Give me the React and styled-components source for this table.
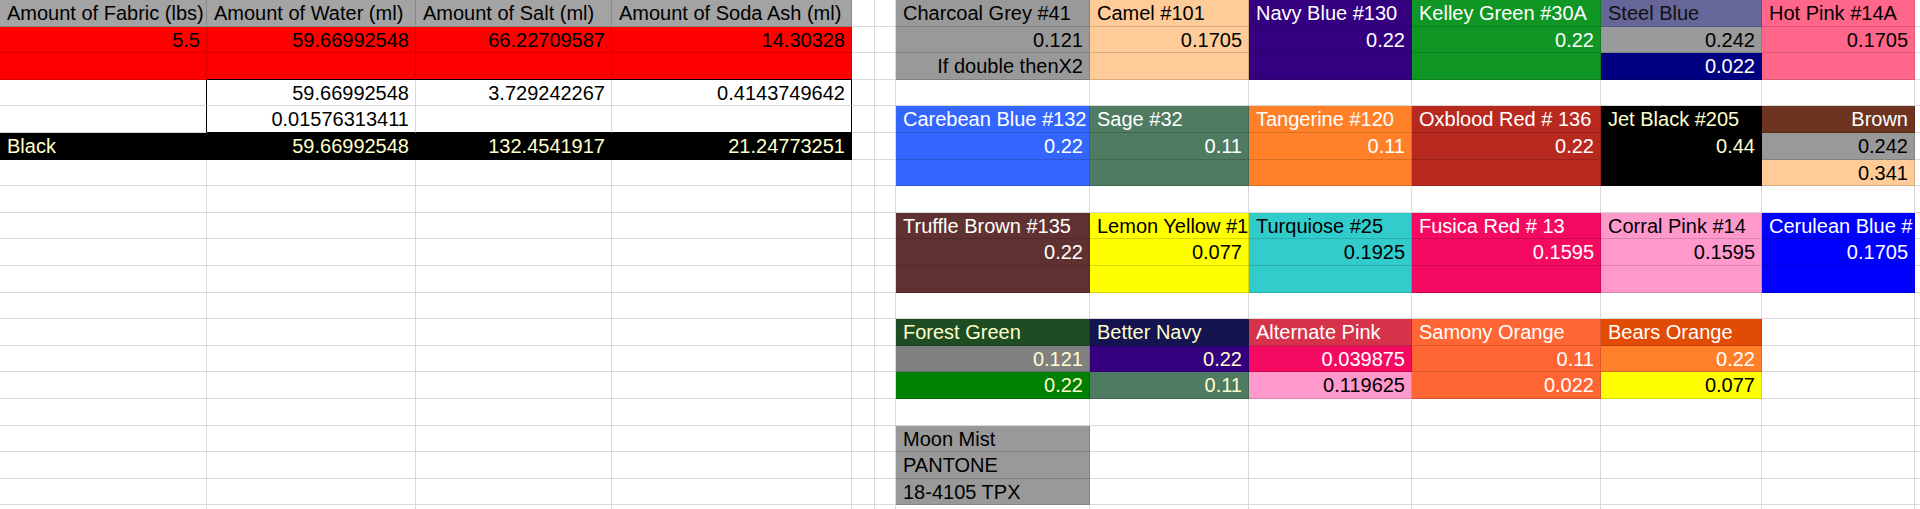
import React from 'react';
import styled, { createGlobalStyle } from 'styled-components';

const GlobalStyle = createGlobalStyle`
  html, body {
    margin: 0;
    padding: 0;
    background: #ffffff;
    overflow: hidden;
  }
  body {
    font-family: "Liberation Sans", Arial, Helvetica, sans-serif;
  }
`;

const COLS = [207, 209, 196, 240, 23, 21, 194, 159, 163, 189, 161, 153, 5];
const ROW_COUNT = 20;

const Sheet = styled.div`
  display: grid;
  grid-template-columns: ${COLS.map((w) => `${w}px`).join(' ')};
  grid-auto-rows: 26.6px;
  width: 1920px;
  height: 509px;
  overflow: hidden;
  font-size: 20px;
`;

const Cell = styled.div`
  box-sizing: border-box;
  background: ${(p) => p.$bg || '#ffffff'};
  color: ${(p) => p.$fg || '#000000'};
  text-align: ${(p) => p.$align || 'right'};
  border-right: 1px solid ${(p) => (p.$edgeR ? '#000000' : 'rgba(0, 0, 0, 0.15)')};
  border-bottom: 1px solid ${(p) => (p.$edgeB ? '#000000' : 'rgba(0, 0, 0, 0.15)')};
  padding: 1px 6px 0 7px;
  line-height: 25px;
  white-space: nowrap;
  overflow: hidden;
`;

// palette
const GREY = '#999999';
const HEAD = '#a3a3a3';
const RED = '#ff0000';
const CREAM = '#ffffcc';
const WHITE = '#ffffff';
const CAMEL = '#ffcc99';
const PURPLE = '#340080';
const KELLEY = '#0f9624';
const SAGE = '#4e7b61';
const ORANGE = '#ff8029';
const YELLOW = '#ffff00';
const PINK = '#ff99cc';
const FUSICA = '#f50a62';
const SAMONY = '#ff6633';

const c = (v = '', bg, fg, align, extra = {}) => ({ v, bg, fg, align, ...extra });
const blank = () => c();

// left block, columns A-D
const left = (r) => {
  switch (r) {
    case 0:
      return [
        c('Amount of Fabric (lbs)', HEAD, '#000', 'left'),
        c('Amount of Water (ml)', HEAD, '#000', 'left'),
        c('Amount of Salt (ml)', HEAD, '#000', 'left'),
        c('Amount of Soda Ash (ml)', HEAD, '#000', 'left'),
      ];
    case 1:
      return [
        c('5.5', RED),
        c('59.66992548', RED),
        c('66.22709587', RED),
        c('14.30328', RED),
      ];
    case 2:
      return [c('', RED), c('', RED, null, null, { edgeB: true }), c('', RED, null, null, { edgeB: true }), c('', RED, null, null, { edgeB: true })];
    case 3:
      return [
        c('', null, null, null, { edgeR: true }),
        c('59.66992548'),
        c('3.729242267'),
        c('0.4143749642', null, null, null, { edgeR: true }),
      ];
    case 4:
      return [
        c('', null, null, null, { edgeR: true }),
        c('0.01576313411', null, null, null, { edgeB: true }),
        c('', null, null, null, { edgeB: true }),
        c('', null, null, null, { edgeR: true, edgeB: true }),
      ];
    case 5:
      return [
        c('Black', '#000', CREAM, 'left'),
        c('59.66992548', '#000', CREAM),
        c('132.4541917', '#000', CREAM),
        c('21.24773251', '#000', CREAM),
      ];
    default:
      return [blank(), blank(), blank(), blank()];
  }
};

// colour swatches, columns G-L
const right = (r) => {
  switch (r) {
    case 0:
      return [
        c('Charcoal Grey #41', GREY, '#000', 'left'),
        c('Camel #101', CAMEL, '#000', 'left'),
        c('Navy Blue #130', PURPLE, WHITE, 'left'),
        c('Kelley Green #30A', KELLEY, WHITE, 'left'),
        c('Steel Blue', '#666699', '#111', 'left'),
        c('Hot Pink #14A', '#ff6689', '#000', 'left'),
      ];
    case 1:
      return [
        c('0.121', GREY),
        c('0.1705', CAMEL),
        c('0.22', PURPLE, WHITE),
        c('0.22', KELLEY, WHITE),
        c('0.242', GREY),
        c('0.1705', '#ff6689'),
      ];
    case 2:
      return [
        c('If double thenX2', GREY),
        c('', CAMEL),
        c('', PURPLE),
        c('', KELLEY),
        c('0.022', '#000080', WHITE),
        c('', '#ff6689'),
      ];
    case 4:
      return [
        c('Carebean Blue #132', '#3366ff', WHITE, 'left'),
        c('Sage #32', SAGE, WHITE, 'left'),
        c('Tangerine #120', ORANGE, WHITE, 'left'),
        c('Oxblood Red # 136', '#b8291f', WHITE, 'left'),
        c('Jet Black #205', '#000', CREAM, 'left'),
        c('Brown', '#6d3420', WHITE),
      ];
    case 5:
      return [
        c('0.22', '#3366ff', WHITE),
        c('0.11', SAGE, WHITE),
        c('0.11', ORANGE, WHITE),
        c('0.22', '#b8291f', WHITE),
        c('0.44', '#000', CREAM),
        c('0.242', GREY),
      ];
    case 6:
      return [
        c('', '#3366ff'),
        c('', SAGE),
        c('', ORANGE),
        c('', '#b8291f'),
        c('', '#000'),
        c('0.341', CAMEL),
      ];
    case 8:
      return [
        c('Truffle Brown #135', '#5f3131', WHITE, 'left'),
        c('Lemon Yellow #1', YELLOW, '#000', 'left'),
        c('Turquiose #25', '#33cccc', '#000', 'left'),
        c('Fusica Red # 13', FUSICA, WHITE, 'left'),
        c('Corral Pink #14', PINK, '#000', 'left'),
        c('Cerulean Blue #', '#0000ff', WHITE, 'left'),
      ];
    case 9:
      return [
        c('0.22', '#5f3131', WHITE),
        c('0.077', YELLOW),
        c('0.1925', '#33cccc'),
        c('0.1595', FUSICA, WHITE),
        c('0.1595', PINK),
        c('0.1705', '#0000ff', WHITE),
      ];
    case 10:
      return [
        c('', '#5f3131'),
        c('', YELLOW),
        c('', '#33cccc'),
        c('', FUSICA),
        c('', PINK),
        c('', '#0000ff'),
      ];
    case 12:
      return [
        c('Forest Green', '#1e4d24', CREAM, 'left'),
        c('Better Navy', '#141450', CREAM, 'left'),
        c('Alternate Pink', '#d6334b', WHITE, 'left'),
        c('Samony Orange', SAMONY, WHITE, 'left'),
        c('Bears Orange', '#e14b05', WHITE, 'left'),
        blank(),
      ];
    case 13:
      return [
        c('0.121', '#808080', CREAM),
        c('0.22', PURPLE, CREAM),
        c('0.039875', FUSICA, WHITE),
        c('0.11', SAMONY, WHITE),
        c('0.22', ORANGE, WHITE),
        blank(),
      ];
    case 14:
      return [
        c('0.22', '#008000', CREAM),
        c('0.11', SAGE, CREAM),
        c('0.119625', PINK),
        c('0.022', SAMONY, WHITE),
        c('0.077', YELLOW),
        blank(),
      ];
    case 16:
      return [c('Moon Mist', GREY, '#000', 'left'), blank(), blank(), blank(), blank(), blank()];
    case 17:
      return [c('PANTONE', GREY, '#000', 'left'), blank(), blank(), blank(), blank(), blank()];
    case 18:
      return [c('18-4105 TPX', GREY, '#000', 'left'), blank(), blank(), blank(), blank(), blank()];
    default:
      return [blank(), blank(), blank(), blank(), blank(), blank()];
  }
};

const rows = Array.from({ length: ROW_COUNT }, (_, r) => [
  ...left(r),
  blank(),
  blank(),
  ...right(r),
  blank(),
]);

const App = () => {
  return (
    <>
      <GlobalStyle />
      <Sheet>
        {rows.map((row, r) =>
          row.map((cell, i) => (
            <Cell
              key={`${r}-${i}`}
              $bg={cell.bg}
              $fg={cell.fg}
              $align={cell.align}
              $edgeR={cell.edgeR}
              $edgeB={cell.edgeB}
            >
              {cell.v}
            </Cell>
          ))
        )}
      </Sheet>
    </>
  );
};

export default App;
